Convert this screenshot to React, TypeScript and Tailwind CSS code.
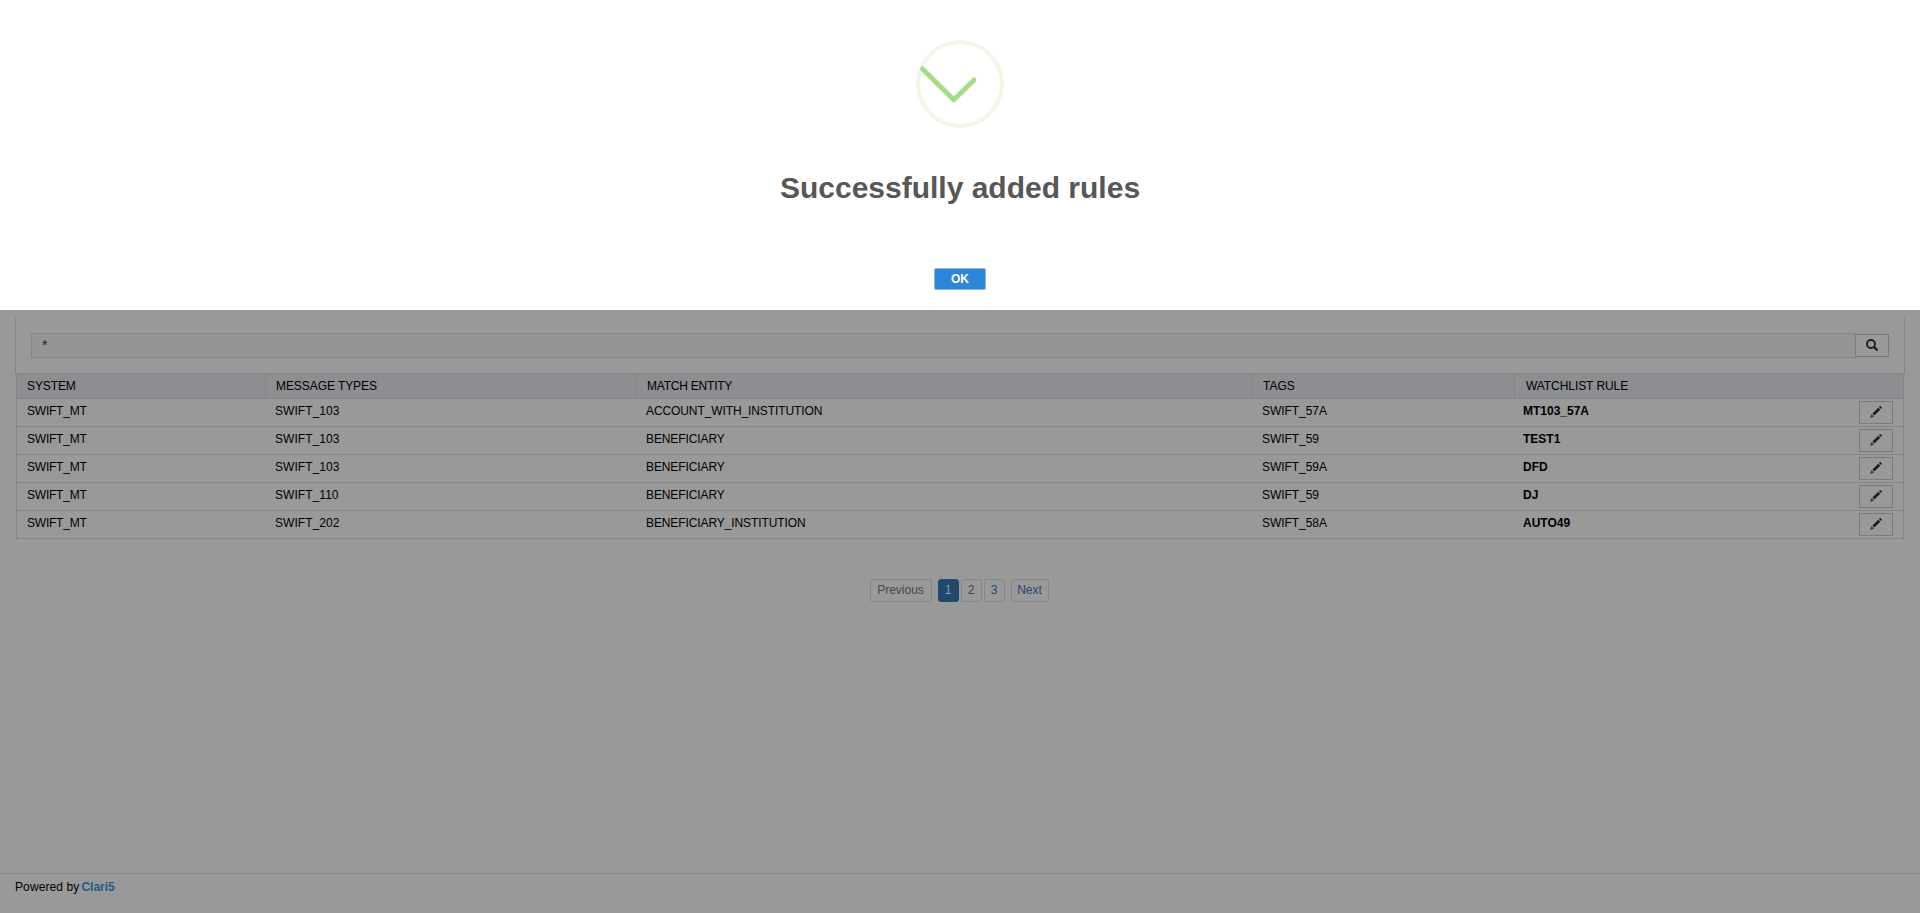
type Rule = {
  system: string;
  messageType: string;
  entity: string;
  tag: string;
  rule: string;
};

const rules: Rule[] = [
  { system: "SWIFT_MT", messageType: "SWIFT_103", entity: "ACCOUNT_WITH_INSTITUTION", tag: "SWIFT_57A", rule: "MT103_57A" },
  { system: "SWIFT_MT", messageType: "SWIFT_103", entity: "BENEFICIARY", tag: "SWIFT_59", rule: "TEST1" },
  { system: "SWIFT_MT", messageType: "SWIFT_103", entity: "BENEFICIARY", tag: "SWIFT_59A", rule: "DFD" },
  { system: "SWIFT_MT", messageType: "SWIFT_110", entity: "BENEFICIARY", tag: "SWIFT_59", rule: "DJ" },
  { system: "SWIFT_MT", messageType: "SWIFT_202", entity: "BENEFICIARY_INSTITUTION", tag: "SWIFT_58A", rule: "AUTO49" },
];

function SearchIcon() {
  return (
    <svg className="mb-px" width="12" height="12" viewBox="0 0 12 12" fill="none" stroke="#1f1f1f">
      <circle cx="5" cy="5" r="4" strokeWidth="1.9" />
      <path d="M8.2 8.2l2.6 2.6" strokeWidth="2.3" strokeLinecap="round" />
    </svg>
  );
}

function PencilIcon() {
  return (
    <svg className="mb-px" width="12" height="12" viewBox="0 0 12 12" fill="#1f1f1f">
      <path d="M9 1 9.7.3q.5-.5 1 0l1 1q.5.5 0 1L11 3z" />
      <path d="M8.3 1.7 10.3 3.7 4.4 9.6 2.4 7.6z" />
      <path d="M1.4 8 4 10.6 0 12z" fillOpacity="0.8" />
    </svg>
  );
}

function SuccessIcon() {
  return (
    <svg className="mt-10" width="88" height="88" viewBox="0 0 88 88" fill="none">
      <circle cx="44" cy="44" r="42" stroke="#edf8e7" strokeWidth="4" />
      <path d="M6.5 29 37.7 59.8 58 40" stroke="#a5dc86" strokeWidth="5" strokeLinecap="round" strokeLinejoin="round" />
    </svg>
  );
}

function SuccessDialog() {
  return (
    <div className="flex h-[310px] flex-col items-center bg-white">
      <SuccessIcon />
      <h2 className="mt-[40px] text-[30px] leading-10 font-bold text-[#575757]">Successfully added rules</h2>
      <button className="mt-[60px] h-[22px] w-[52px] rounded-[2px] border border-[#86b8e8] bg-[#2f86d8] text-[12px] leading-5 font-bold text-white">
        OK
      </button>
    </div>
  );
}

function PageLink({ label, className }: { label: string; className: string }) {
  return (
    <span className={`h-[23px] rounded-[3px] border text-center leading-[21px] ${className}`}>{label}</span>
  );
}

export default function App() {
  return (
    <div className="flex h-[913px] w-full flex-col overflow-hidden bg-[#999] font-['Liberation_Sans',Arial,sans-serif] text-[12px] leading-[17px] text-black">
      <SuccessDialog />
      <main className="mx-[15px] mt-2 flex grow flex-col">
        <div className="flex h-[55px] items-center border-x border-[#858585] px-[15px]">
          <div className="flex h-[25px] grow items-center border border-[#858585] bg-[#959595] px-[10px] text-[14px] text-[#222]">*</div>
          <button className="-ml-px flex h-[23px] w-[34px] items-center justify-center border border-[#7a7a7a]">
            <SearchIcon />
          </button>
        </div>
        <div className="h-px bg-[#858585]" />
        <div className="mx-px border-x border-[#858585]">
          <div className="flex h-[25px] border-b border-[#858585] bg-[#8c8e91] leading-6">
            <div className="w-[249px] border-r border-[#858585] pl-[10px] tracking-[-0.1px]">SYSTEM</div>
            <div className="w-[371px] border-r border-[#858585] pl-[10px] tracking-[-0.07px]">MESSAGE TYPES</div>
            <div className="w-[616px] border-r border-[#858585] pl-[10px] tracking-[-0.22px]">MATCH ENTITY</div>
            <div className="w-[262px] border-r border-[#858585] pl-[10px]">TAGS</div>
            <div className="grow pl-[11px] tracking-[-0.07px]">WATCHLIST RULE</div>
          </div>
          {rules.map((r, i) => (
            <div key={i} className="flex h-7 border-b border-[#858585] pt-[4px] pr-[10px]">
              <div className="w-[248px] pl-[10px] tracking-[-0.22px]">{r.system}</div>
              <div className="w-[371px] pl-[10px] tracking-[0.05px]">{r.messageType}</div>
              <div className="w-[616px] pl-[10px] tracking-[-0.1px]">{r.entity}</div>
              <div className="w-[261px] pl-[10px] tracking-[-0.05px]">{r.tag}</div>
              <div className="grow pl-[10px] font-bold">{r.rule}</div>
              <button className="-mt-[2px] flex h-[23px] w-[34px] items-center justify-center border border-[#7a7a7a]">
                <PencilIcon />
              </button>
            </div>
          ))}
        </div>
        <nav className="mt-[40px] mr-[2px] flex justify-center">
          <PageLink label="Previous" className="mr-[6px] w-[62px] border-[#858585] text-[#474747]" />
          <PageLink label="1" className="mr-[2px] w-[21px] border-[#1f496e] bg-[#1f496e] text-[#999]" />
          <PageLink label="2" className="mr-[2px] w-[21px] border-[#858585] text-[#1f496e]" />
          <PageLink label="3" className="mr-[6px] w-[21px] border-[#858585] text-[#1f496e]" />
          <PageLink label="Next" className="w-[38px] border-[#858585] text-[#1f496e]" />
        </nav>
      </main>
      <footer className="h-10 border-t border-[#858585] px-[15px] pt-[5px]">
        <span className="tracking-[0.1px]">Powered by</span>
        <b className="ml-[2px] text-[#265b80]">Clari5</b>
      </footer>
    </div>
  );
}
